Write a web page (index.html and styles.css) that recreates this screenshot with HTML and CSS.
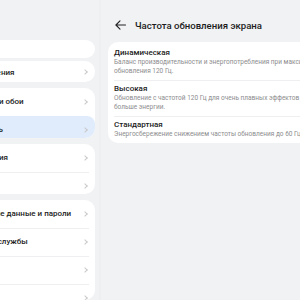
FILE: index.html
```html
<!DOCTYPE html>
<html lang="ru">
<head>
    <meta charset="UTF-8">
    <meta name="viewport" content="width=device-width, initial-scale=1.0">
    <title>Частота обновления экрана</title>
    <link rel="stylesheet" href="styles.css">
</head>
<body>
    <div class="screen">
        <aside class="sidebar">
            <div class="card card-short">
                <div class="row"><span class="label">Bluetooth</span></div>
            </div>
            <div class="card card-mid">
                <div class="row"><span class="label">Другие соединения</span><span class="chev"></span></div>
            </div>
            <div class="card">
                <div class="row"><span class="label">Рабочий экран и обои</span><span class="chev"></span></div>
                <div class="row active"><span class="label">Экран и яркость</span><span class="chev"></span></div>
            </div>
            <div class="card">
                <div class="row"><span class="label">Звуки и вибрация</span><span class="chev"></span></div>
                <div class="row"><span class="label">Уведомления</span><span class="chev"></span></div>
            </div>
            <div class="card">
                <div class="row"><span class="label">Биометрические данные и пароли</span><span class="chev"></span></div>
                <div class="row"><span class="label">Приложения и службы</span><span class="chev"></span></div>
                <div class="row"><span class="label">Батарея</span><span class="chev"></span></div>
                <div class="row"><span class="label">Память</span><span class="chev"></span></div>
            </div>
        </aside>

        <div class="divider"></div>

        <main class="detail">
            <header class="header">
                <svg class="back" width="11" height="10" viewBox="0 0 11 10">
                    <path d="M10.5 5H1M5 0.8L0.9 5L5 9.2" fill="none" stroke="#222" stroke-width="1.1" stroke-linecap="round" stroke-linejoin="round"/>
                </svg>
                <h1>Частота обновления экрана</h1>
            </header>

            <div class="options">
                <div class="option">
                    <div class="option-title">Динамическая</div>
                    <div class="option-desc">Баланс производительности и энергопотребления при максимальной частоте<br>обновления 120 Гц.</div>
                </div>
                <div class="option">
                    <div class="option-title">Высокая</div>
                    <div class="option-desc">Обновление с частотой 120 Гц для очень плавных эффектов анимации. Потребляет<br>больше энергии.</div>
                </div>
                <div class="option">
                    <div class="option-title">Стандартная</div>
                    <div class="option-desc">Энергосбережение снижением частоты обновления до 60 Гц.</div>
                </div>
            </div>
        </main>
    </div>
</body>
</html>
```

FILE: styles.css
```css
html, body {
    margin: 0;
    padding: 0;
}
body {
    font-family: Roboto, "Noto Sans", sans-serif;
    background-color: #f1f2f4;
    width: 300px;
    height: 300px;
    overflow: hidden;
}
.screen {
    display: flex;
    height: 300px;
}

/* left list, scrolled / cut off on the left */
.sidebar {
    flex: none;
    width: 245px;
    margin-left: -150px;
    padding-top: 40px;
    display: flex;
    flex-direction: column;
    gap: 6px;
}
.card {
    background: #fff;
    border-radius: 10px;
    overflow: hidden;
}
.card-short {
    height: 20px;
    margin-bottom: -3px;
}
.card-mid .row {
    height: 23px;
}
.row {
    height: 28px;
    display: flex;
    align-items: center;
    padding: 0 6px 0 91px;
    position: relative;
    font-size: 8px;
    font-weight: 500;
    color: #1c1c1c;
    white-space: nowrap;
}
.row + .row::before {
    content: "";
    position: absolute;
    top: 0;
    left: 91px;
    right: 6px;
    height: 1px;
    background: #efeff1;
}
.row.active {
    background: #e0ecfb;
    border-radius: 8px;
}
.row.active::before,
.row.active + .row::before {
    display: none;
}
.label {
    flex: 1;
}
.chev {
    width: 3px;
    height: 3px;
    border-top: 1px solid #c8c8ca;
    border-right: 1px solid #c8c8ca;
    transform: rotate(45deg);
    margin-right: 2px;
}

.divider {
    flex: none;
    width: 2px;
    margin-left: 4px;
    background: #eeeff1;
}

/* right detail pane */
.detail {
    flex: none;
    width: 340px;
    padding-left: 7px;
}
.header {
    display: flex;
    align-items: center;
    height: 20px;
    margin-top: 15px;
    padding-left: 7px;
}
.back {
    margin-right: 9px;
}
.header h1 {
    margin: 0;
    font-size: 9.6px;
    font-weight: 500;
    color: #1c1c1c;
}
.options {
    margin-top: 7px;
    padding-top: 2px;
    background: #fff;
    border-radius: 10px;
}
.option {
    padding: 4px 6px;
    position: relative;
}
.option + .option::before {
    content: "";
    position: absolute;
    top: 0;
    left: 6px;
    right: 0;
    height: 1px;
    background: #efeff1;
}
.option-title {
    font-size: 8px;
    font-weight: 500;
    line-height: 10px;
    color: #1c1c1c;
}
.option-desc {
    font-size: 6.5px;
    line-height: 9px;
    color: #8c8c8e;
    white-space: nowrap;
}
```
